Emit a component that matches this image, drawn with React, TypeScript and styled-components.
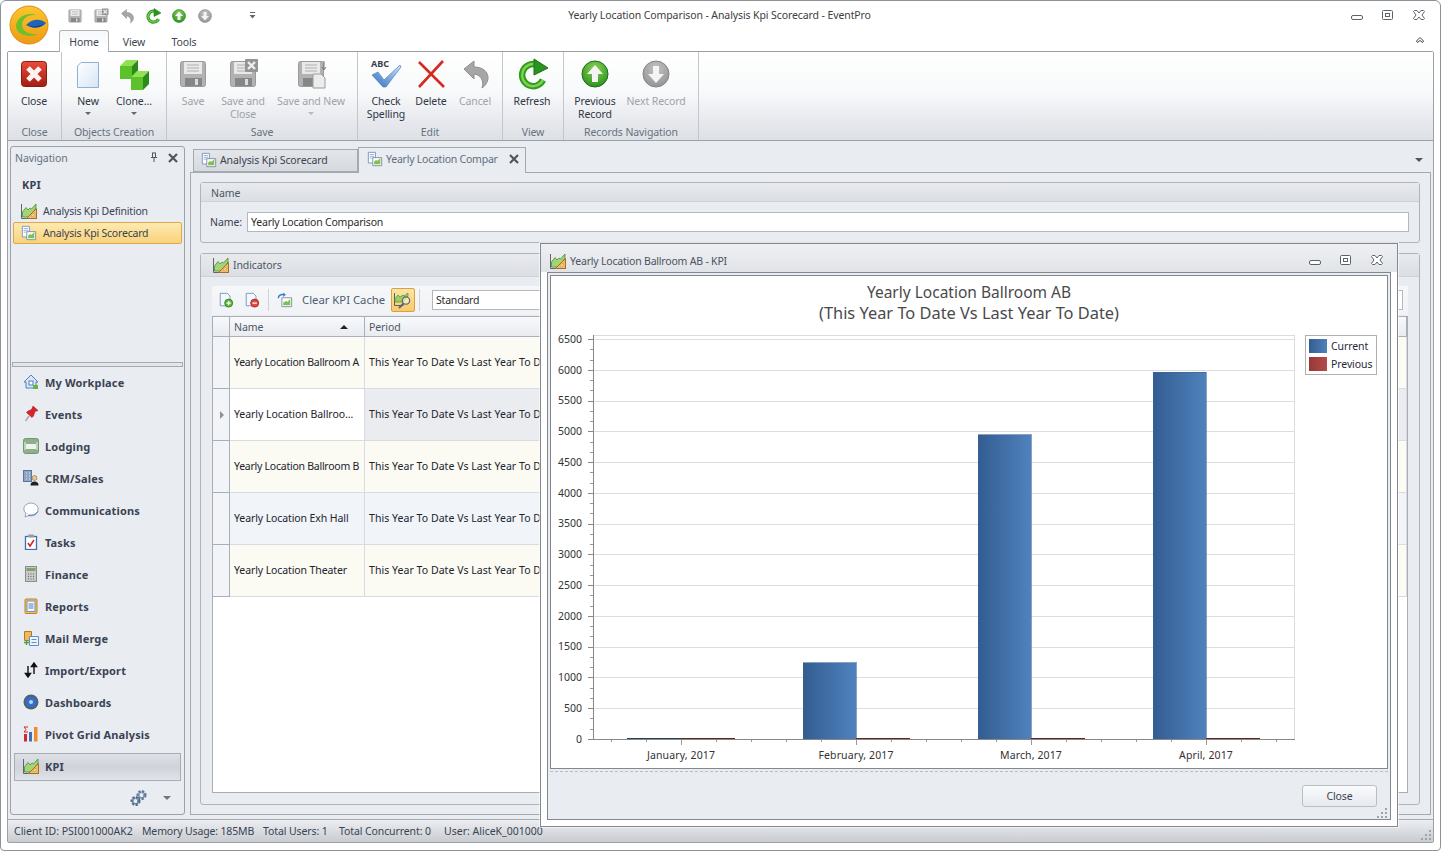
import React from "react";
import styled, { createGlobalStyle } from "styled-components";

const FONT = `"Noto Sans", "DejaVu Sans", sans-serif`;

const Global = createGlobalStyle`
  html, body { margin: 0; padding: 0; background: #fff; overflow: hidden; }
  body { font-family: ${FONT}; font-size: 10.5px; letter-spacing: -0.1px; color: #2f3744; }
  * { box-sizing: border-box; }
`;

const Window = styled.div`
  position: relative; width: 1441px; height: 851px; background: #fff;
  border: 1px solid #8d9299; border-radius: 6px 6px 4px 4px;
  display: flex; flex-direction: column; overflow: hidden;
`;
const LogoSlot = styled.div`position: absolute; left: 8px; top: 4px; width: 40px; height: 40px;`;
const TitleRow = styled.div`
  height: 29px; display: grid; grid-template-columns: 1fr auto 1fr; align-items: center;
`;
const Qat = styled.div`display: flex; align-items: center; gap: 10px; padding-left: 66px;`;
const QatMenu = styled.span`margin-left: 25px; display: flex;`;
const WindowTitle = styled.div`color: #3d3d3d; padding: 0 2px 2px 0;`;
const Controls = styled.div`display: flex; justify-content: flex-end; align-items: center; gap: 17px; padding-right: ${p => p.$pad}px;`;
const TabRow = styled.div`
  height: 21px; display: flex; align-items: stretch; padding-left: 58px; position: relative; z-index: 1;
`;
const TopTab = styled.div`
  width: 50px; height: 22px; display: flex; align-items: center; justify-content: center; color: #3d4654;
  border: 1px solid ${p => (p.$active ? "#aeb3b9" : "transparent")};
  border-bottom: 0; border-radius: 3px 3px 0 0;
  background: ${p => (p.$active ? "linear-gradient(#f7f8fa,#fff)" : "transparent")};
`;
const Collapse = styled.div`margin-left: auto; padding: 5px 15px 0 0;`;
const Frame = styled.div`
  flex: 1; margin: 0 6px 7px 6px; border: 1px solid #9ca1a8; display: flex; flex-direction: column; min-height: 0;
  border-radius: 2px;
`;
const Ribbon = styled.div`
  height: 89px; display: flex; border-bottom: 1px solid #9ca1a8;
  background: linear-gradient(#fff 0%, #f8f9fa 45%, #e6e8ed 80%, #dde0e5 100%);
`;
const RibbonGroup = styled.div`
  width: ${p => p.$w}px; display: flex; flex-direction: column; border-right: 1px solid #c3c7cd;
`;
const GroupButtons = styled.div`height: 73px; display: flex; padding-left: ${p => p.$pad}px;`;
const GroupLabel = styled.div`height: 15px; line-height: 14px; text-align: center; color: #66727f;`;
const RibbonButton = styled.div`
  width: ${p => p.$w}px; display: flex; flex-direction: column; align-items: center; padding-top: 6px;
  color: ${p => (p.$off ? "#9fa3a8" : "#2f3744")}; flex-shrink: 0;
`;
const RibbonLabel = styled.div`margin-top: 5px; line-height: 13px; text-align: center; white-space: pre-line;`;
const Caret = styled.div`
  width: 0; height: 0; margin-top: 4px; border: 3px solid transparent; border-bottom: 0;
  border-top-color: ${p => (p.$off ? "#b5b9be" : "#666")};
`;
const Workspace = styled.div`
  flex: 1; display: flex; gap: 5px; padding: 5px 2px 4px 2px; background: #e9ecf1; min-height: 0;
`;
const NavPanel = styled.div`
  width: 175px; border: 1px solid #9ca1a8; border-radius: 3px; display: flex; flex-direction: column;
`;
const NavTop = styled.div`flex: 1; min-height: 0;`;
const NavHeader = styled.div`
  height: 22px; display: flex; align-items: center; padding: 0 5px 0 4px; color: #66727f;
`;
const NavHeaderText = styled.span`flex: 1;`;
const NavPin = styled.span`display: flex; margin-right: 5px;`;
const NavTitle = styled.div`
  height: 22px; margin: 5px 0 4px; padding-left: 11px; line-height: 22px; font-weight: 700; font-size: 11px; letter-spacing: .15px; color: #3a4352;
`;
const NavLink = styled.div`
  height: 22px; margin: 0 2px; padding: 0 0 1px 7px; display: flex; align-items: center; gap: 6px; color: #3a4352; letter-spacing: -.2px;
  border: 1px solid ${p => (p.$active ? "#dfa64b" : "transparent")}; border-radius: 2px;
  background: ${p => (p.$active ? "linear-gradient(#fdeab0,#f9d27c)" : "transparent")};
`;
const Splitter = styled.div`height: 5px; margin: 0 1px; border: 1px solid #a5aab1; background: #e3e6ea;`;
const ModuleRow = styled.div`
  height: 28px; margin: 2px 3px; padding: 0 0 2px 8px; display: flex; align-items: center; gap: 6px;
  font-weight: 700; font-size: 11px; letter-spacing: .15px; color: #3a4352; border: 1px solid ${p => (p.$active ? "#a8adb4" : "transparent")};
  background: ${p => (p.$active ? "linear-gradient(#dde0e5,#cfd3da 50%,#e0e3e8)" : "transparent")};
`;
const NavFooter = styled.div`height: 31px; display: flex; align-items: center; justify-content: flex-end; gap: 15px; padding: 0 13px 2px 0;`;
const FooterCaret = styled.div`width: 0; height: 0; border: 4px solid transparent; border-bottom: 0; border-top-color: #777;`;
const DocArea = styled.div`flex: 1; display: flex; flex-direction: column; min-width: 0;`;
const DocTabs = styled.div`height: 26px; display: flex; align-items: flex-end; padding-left: 3px; position: relative; z-index: 1;`;
const DocTab = styled.div`
  width: ${p => p.$w}px; height: ${p => (p.$active ? 26 : 23)}px; display: flex; align-items: center; gap: 3px;
  padding: 0 0 ${p => (p.$active ? 4 : 2)}px ${p => (p.$active ? 8 : 7)}px;
  border: 1px solid #a5aab1; border-bottom: ${p => (p.$active ? "0" : "1px solid #a5aab1")};
  color: ${p => (p.$active ? "#5f6f80" : "#3a4352")}; letter-spacing: ${p => (p.$active ? "-.23px" : "-.1px")};
  background: ${p => (p.$active ? "#e9ecf1" : "linear-gradient(#e4e6ea,#d6d9de)")};
  margin-bottom: ${p => (p.$active ? "-1px" : "0")};
`;
const DocTabText = styled.span`flex: 1; white-space: nowrap;`;
const DocTabClose = styled.span`display: flex; padding-right: 5px;`;
const DocMenu = styled.div`margin-left: auto; margin-bottom: 10px; margin-right: 8px; width: 0; height: 0; border: 4px solid transparent; border-bottom: 0; border-top-color: #555;`;
const DocBody = styled.div`
  flex: 1; border: 1px solid #a5aab1; padding: 9px 10px 9px 9px; display: flex; flex-direction: column; gap: 10px; min-height: 0;
`;
const Group = styled.div`border: 1px solid #b0b4ba; border-radius: 3px; display: flex; flex-direction: column;`;
const GroupFill = styled(Group)`flex: 1; min-height: 0;`;
const GroupHeader = styled.div`
  height: ${p => p.$h}px; display: flex; align-items: center; gap: 4px; padding: ${p => p.$top}px 0 0 ${p => p.$pad}px; color: #4c5866;
  background: linear-gradient(#e8eaee,#dbdee3); border-bottom: 1px solid #ced1d6;
`;
const NameRow = styled.div`height: 40px; display: flex; padding: 10px 10px 0 9px; color: #3a4352;`;
const NameLabel = styled.div`width: 37px; line-height: 20px;`;
const TextBox = styled.div`
  flex: 1; height: 20px; line-height: 18px; background: #fff; border: 1px solid #b4b8be; padding-left: 3px; color: #2b2b2b; letter-spacing: -.2px;
  margin-right: ${p => p.$mr || 0}px; margin-left: ${p => p.$ml || 0}px;
`;
const IndicatorsBody = styled.div`flex: 1; padding: 9px 11px 11px; display: flex; flex-direction: column; min-height: 0;`;
const Toolbar = styled.div`
  height: 29px; display: flex; align-items: center; padding: 0 0 1px 6px; background: linear-gradient(#f6f7f9,#f0f2f5);
`;
const ToolSlot = styled.span`display: flex; margin-right: ${p => p.$mr || 0}px;`;
const ToolSep = styled.span`width: 1px; height: 22px; background: #cfd2d7; margin: 0 ${p => p.$mr}px 0 ${p => p.$ml}px;`;
const ToolText = styled.span`width: 89px; margin-left: 9px; padding-bottom: 2px; color: #4c5d70; font-size: 11.3px; letter-spacing: 0; white-space: nowrap;`;
const ToolToggle = styled.span`
  width: 24px; height: 24px; display: flex; align-items: center; justify-content: center;
  border: 1px solid #d9a044; border-radius: 2px; background: linear-gradient(#fde5a6,#f8ca6b);
`;
const Grid = styled.div`
  flex: 1; margin-top: 1px; border: 1px solid #a9aeb6; padding: 0; background: #fff; min-height: 0;
`;
const GridHeader = styled.div`
  height: 20px; display: grid; grid-template-columns: 17px 135px 1fr; background: linear-gradient(#f8f9fb,#e8ebf0); border-bottom: 1px solid #a9b0bc;
  color: #4c5866;
`;
const HeadStub = styled.div`border-right: 1px solid #a9b0bc;`;
const HeadCell = styled.div`
  display: flex; align-items: center; justify-content: space-between; padding: 0 16px 0 4px; border-right: 1px solid #a9b0bc;
`;
const SortUp = styled.span`width: 0; height: 0; border: 4px solid transparent; border-top: 0; border-bottom: 4px solid #222;`;
const GridRow = styled.div`height: 52px; display: grid; grid-template-columns: 17px 135px 1fr;`;
const RowHead = styled.div`
  background: #f2f4f8; border-right: 1px solid #a9b0bc; border-bottom: 1px solid #a9b0bc; display: flex; align-items: center; justify-content: center;
`;
const RowArrow = styled.span`width: 0; height: 0; border: 4px solid transparent; border-right: 0; border-left: 4px solid #8d9299; margin-left: 2px;`;
const Cell = styled.div`
  background: ${p => p.$bg}; border-right: 1px solid #d8dbe1; border-bottom: 1px solid #d8dbe1; letter-spacing: ${p => p.$ls}px;
  display: flex; align-items: center; padding: 0 0 1px 4px; color: #20242c; white-space: nowrap; overflow: hidden;
`;
const StatusBar = styled.div`
  height: 23px; display: flex; align-items: center; padding: 0 0 1px 6px; color: #3a4352; position: relative;
  background: linear-gradient(#eceef2,#c8cbd0); border-top: 1px solid #a5aab1;
`;
const StatusItem = styled.span`width: ${p => p.$w}px; white-space: nowrap; flex-shrink: 0; letter-spacing: ${p => p.$ls ?? -0.1}px;`;
const Grip = styled.span`position: absolute; right: ${p => p.$r}px; bottom: ${p => p.$b}px; display: flex;`;

const Modal = styled.div`
  position: absolute; left: 539px; top: 242px; width: 858px; height: 584px; background: #fff; border: 1px solid #83888f;
  display: flex; flex-direction: column; box-shadow: 0 0 0 1px rgba(255,255,255,.6); z-index: 5;
`;
const ModalTitle = styled.div`
  height: 28px; display: grid; grid-template-columns: 1fr auto; align-items: center; padding: 5px 0 0 9px;
  background: linear-gradient(#eff0f3,#e0e3e7);
`;
const ModalTitleText = styled.div`display: flex; align-items: center; gap: 4px; color: #4a5462; letter-spacing: -.2px;`;
const ModalBody = styled.div`
  flex: 1; margin: 0 6px 6px; border: 1px solid #83888f; padding: 2px 2px 0; background: #e9ecf1; display: flex; flex-direction: column;
`;
const ChartPanel = styled.div`height: 494px; border: 1px solid #83888f; background: #fff; display: flex;`;
const ModalFooter = styled.div`
  flex: 1; position: relative; margin-top: 2px; border-top: 1px dashed #b9bdc4; display: flex; justify-content: flex-end; align-items: flex-start;
  padding: 13px 11px 0 0;
`;
const PushButton = styled.div`
  width: 75px; height: 22px; line-height: 20px; text-align: center; color: #3a4352; border: 1px solid #b9bdc4; border-radius: 3px;
  background: linear-gradient(#fafbfc,#e6e9ee);
`;
const ChartTitle = styled.text`font: ${p => p.$size}px ${FONT}; letter-spacing: 0; fill: #4a4a4a; text-anchor: middle;`;
const AxisText = styled.text`font: 10.5px ${FONT}; letter-spacing: ${p => p.$ls}px; fill: #333; text-anchor: ${p => p.$anchor};`;
const LegendText = styled.text`font: 10.5px ${FONT}; letter-spacing: -0.1px; fill: #2a2a3a;`;

/* ---------- icons ---------- */
const Ico = styled.svg`display: block; flex-shrink: 0;`;
const Logo = () => (
  <Ico width="40" height="40" viewBox="0 0 40 40">
    <defs>
      <linearGradient id="lg" x1="0" y1="0" x2="0" y2="1"><stop offset="0" stopColor="#fbc62e" /><stop offset="1" stopColor="#ee9a14" /></linearGradient>
    </defs>
    <circle cx="20" cy="20" r="19" fill="url(#lg)" stroke="#d98e14" />
    <path d="M7 21C8 11 19 7 29 10 20 9 13 13 13 20c0 6 7 10 16 9-8 4-21 2-22-8z" fill="#6cc02c" />
    <path d="M17 20c6-6 14-7 20-2-3 4-11 7-20 2z" fill="#1f63b8" />
    <path d="M20 21c5 1 10 0 15-2-3 3-9 5-15 2z" fill="#0e3f86" />
  </Ico>
);
const Floppy = ({ size = 32, badge }: { size?: number; badge?: "x" | "new" }) => (
  <Ico width={size} height={size} viewBox="0 0 32 32">
    <rect x="3.5" y="3.5" width="25" height="25" rx="2" fill="#b2b2b2" stroke="#9a9a9a" />
    <rect x="7" y="4" width="18" height="12" fill="#e9e9e9" />
    <path d="M10 7h12M10 10h12M10 13h12" stroke="#b0b0b0" />
    <rect x="8" y="20" width="17" height="8" fill="#868686" />
    <rect x="18" y="21" width="3" height="6" fill="#dcdcdc" />
    {badge === "x" && (<g><rect x="18" y="1" width="13" height="13" rx="1" fill="#949494" /><path d="M21 4l7 7M28 4l-7 7" stroke="#eee" strokeWidth="2.4" /></g>)}
    {badge === "new" && (<g><path d="M18 16h8l4 4v10H18z" fill="#ececec" stroke="#9c9c9c" /><path d="M29 3v8M27 9l2 3 2-3" stroke="#777" fill="none" /></g>)}
  </Ico>
);
const Undo = ({ size = 32 }: { size?: number }) => (
  <Ico width={size} height={size} viewBox="0 0 32 32">
    <path d="M5 11L15 3v6c8 0 14 4 14 11 0 4-3 8-6 10 2-6 0-13-8-14v5z" fill="#a6a6a6" stroke="#8e8e8e" />
  </Ico>
);
const Refresh = ({ size = 32 }: { size?: number }) => (
  <Ico width={size} height={size} viewBox="0 0 32 32">
    <path d="M27 22A11 11 0 1 1 20 6.500" fill="none" stroke="#2d9c22" strokeWidth="6.500" />
    <path d="M27 22A11 11 0 1 1 20 6.500" fill="none" stroke="#7ed348" strokeWidth="2.500" />
    <path d="M18 1L32 10 18 17z" fill="#2a9420" stroke="#17700f" />
  </Ico>
);
const RoundArrow = ({ size = 32, dir }: { size?: number; dir: "up" | "down" }) => {
  const id = `ra${dir}${size}`;
  const [a, b, c] = dir === "up" ? ["#8ad152", "#1f8a1c", "#176d14"] : ["#c2c2c2", "#8e8e8e", "#858585"];
  return (
    <Ico width={size} height={size} viewBox="0 0 32 32">
      <defs><radialGradient id={id} cx=".5" cy=".3" r=".8"><stop offset="0" stopColor={a} /><stop offset="1" stopColor={b} /></radialGradient></defs>
      <circle cx="16" cy="16" r="13" fill={`url(#${id})`} stroke={c} />
      <path d={dir === "up" ? "M16 7l8 9h-5v8h-6v-8H8z" : "M16 25l8-9h-5V8h-6v8H8z"} fill="#f4f4f4" />
    </Ico>
  );
};
const NewDoc = () => (
  <Ico width="32" height="32" viewBox="0 0 32 32">
    <defs><linearGradient id="nd" x1="0" y1="0" x2="1" y2="1"><stop offset="0" stopColor="#fff" /><stop offset="1" stopColor="#d5e4f5" /></linearGradient></defs>
    <path d="M9 4.500L5.500 8v21.500h21v-25z" fill="url(#nd)" stroke="#8db0da" />
  </Ico>
);
const Cube = ({ x, y }: { x: number; y: number }) => (
  <g transform={`translate(${x} ${y})`}>
    <path d="M0 6L6 0h12l-6 6z" fill="#8fe252" />
    <path d="M0 6h12v13H0z" fill="#5cc22c" />
    <path d="M12 6l6-6v13l-6 6z" fill="#2c8a18" />
  </g>
);
const Clone = () => (
  <Ico width="32" height="32" viewBox="0 0 32 32"><Cube x={2} y={2} /><Cube x={13} y={13} /></Ico>
);
const CloseIcon = () => (
  <Ico width="32" height="32" viewBox="0 0 32 32">
    <defs><linearGradient id="cx" x1="0" y1="0" x2="0" y2="1"><stop offset="0" stopColor="#ea4c3c" /><stop offset="1" stopColor="#a21c12" /></linearGradient></defs>
    <rect x="3.5" y="3.5" width="25" height="25" rx="3" fill="url(#cx)" stroke="#8a1d13" />
    <path d="M10 10l12 12M22 10L10 22" stroke="#fdf3f0" strokeWidth="5" />
  </Ico>
);
const SpellText = styled.text`font: 700 9px ${FONT}; letter-spacing: 0; fill: #39424e;`;
const Spell = () => (
  <Ico width="32" height="32" viewBox="0 0 32 32">
    <defs><linearGradient id="sp" x1="0" y1="1" x2="1" y2="0"><stop offset="0" stopColor="#2f6fbe" /><stop offset="1" stopColor="#cfe2f6" /></linearGradient></defs>
    <SpellText x="1" y="9">ABC</SpellText>
    <path d="M2 17l6-3 6 8L30 7l1 2-15 20h-3z" fill="url(#sp)" stroke="#4b82c4" strokeWidth=".7" />
  </Ico>
);
const DeleteIcon = () => (
  <Ico width="32" height="32" viewBox="0 0 32 32">
    <path d="M4 4l25 25M28 3L4 29" stroke="#d52a20" strokeWidth="2.600" />
  </Ico>
);
const KpiIcon = () => (
  <Ico width="16" height="16" viewBox="0 0 16 16">
    <path d="M.5 1v14.500H16" stroke="#5a6570" fill="none" />
    <path d="M1.500 9L5 4.500l2 2.500 2-2 1.500 1L15 1v4l-6 9H1.500z" fill="#a5d377" stroke="#4c8f2b" strokeWidth=".8" />
    <path d="M15.500 5.500v10h-10z" fill="#efbd69" stroke="#a5701f" />
    <path d="M13 10v3H10z" fill="#fff6dd" stroke="#c08a35" strokeWidth=".5" />
  </Ico>
);
const Scorecard = () => (
  <Ico width="16" height="16" viewBox="0 0 18 18">
    <path d="M1.500 1.500h8v12h-8z" fill="#fff" stroke="#6e93c2" />
    <path d="M3 4h5M3 6h5M3 8h3" stroke="#93add0" />
    <path d="M6.500 7.500h10v9h-10z" fill="#fff" stroke="#7b8a99" />
    <path d="M8 15v-3l2-2 2 1 3-3v7z" fill="#7cc152" />
  </Ico>
);
const S16 = ({ children }: { children: React.ReactNode }) => <Ico width="16" height="16" viewBox="0 0 16 16">{children}</Ico>;
const House = () => <S16><path d="M8 1L1 8h2v6h10V8h2z" fill="#dbe7f6" stroke="#4e7fbe" /><rect x="6" y="7" width="4" height="4" fill="#fff" stroke="#4e7fbe" /><rect x="10" y="11" width="5" height="4" fill="#67b43f" /></S16>;
const Pin = () => <S16><path d="M10 0l5 4.500-3 1-1.500 4.500-1.500 1.500-5.500-5 1.500-1.500 3.500-1.500z" fill="#d8232a" stroke="#a51419" strokeWidth=".5" /><path d="M6 10L2.500 15" stroke="#a8a8a8" strokeWidth="1.500" /></S16>;
const Lodging = () => <S16><rect x=".5" y=".5" width="15" height="15" rx="2" fill="#8fae8c" stroke="#6f9a6c" /><path d="M3 6h10v5H3z" fill="#eef4ec" /><path d="M2 4v8M14 4v8" stroke="#eef4ec" /></S16>;
const Crm = () => <S16><rect x=".5" y=".5" width="8" height="11" fill="#8ea4c6" stroke="#5f7598" /><path d="M3 3h1M6 3h1M3 6h1M6 6h1M3 9h1M6 9h1" stroke="#e2e9f2" /><circle cx="11.500" cy="8" r="2.500" fill="#e9c48e" stroke="#7a5c2e" strokeWidth=".5" /><path d="M7.500 15.500c0-3 1.500-4 4-4s4 1 4 4z" fill="#222" /></S16>;
const Bubble = () => <S16><ellipse cx="8" cy="7" rx="7.200" ry="6" fill="#fff" stroke="#9aa3ad" /><path d="M3 11l-1 4 5-2" fill="#fff" stroke="#9aa3ad" /><path d="M5 13.400c4 1 8 0 10-4" stroke="#4e88c8" fill="none" /></S16>;
const Clip = () => <S16><rect x="2.500" y="2.500" width="11" height="13" fill="#fff" stroke="#3f70ad" strokeWidth="1.300" /><rect x="5" y="0.500" width="6" height="3" rx="1" fill="#9a9a9a" /><path d="M5 9l2 3 4-6" stroke="#d0282e" strokeWidth="1.600" fill="none" /></S16>;
const Calc = () => <S16><rect x="2.500" y=".5" width="11" height="15" fill="#c9c9c9" stroke="#8b8b8b" /><rect x="3.500" y="2" width="9" height="3" fill="#7fa36b" /><path d="M5 8h1M7.500 8h1M10 8h1M5 10.500h1M7.500 10.500h1M10 10.500h1M5 13h1M7.500 13h1M10 13h1" stroke="#666" /></S16>;
const Report = () => <S16><rect x="2" y="1" width="12" height="14.500" rx="1" fill="#f3c166" stroke="#bd8526" /><rect x="4" y="3" width="8" height="10.500" fill="#f5f8fc" stroke="#6d93c2" /><path d="M5.500 6h5M5.500 8h5M5.500 10h5" stroke="#4e7fbe" /></S16>;
const Merge = () => <S16><path d="M1.500 1.500h7v9h-7z" fill="#f0b95f" stroke="#b27b20" /><path d="M6.500 6.500h9v9h-9z" fill="#eef4fb" stroke="#5f8fca" /><path d="M8.500 9.500h5M8.500 12.500h5" stroke="#5f8fca" /><path d="M3.500 10v5M1 12.500h5" stroke="#4da636" strokeWidth="1.500" /></S16>;
const ImpExp = () => <S16><path d="M5 4v10M2.500 11.500L5 15l2.500-3.500z" stroke="#111" strokeWidth="1.400" fill="#111" /><path d="M11 12V2M8.500 4.500L11 1l2.500 3.500z" stroke="#111" strokeWidth="1.400" fill="#111" /></S16>;
const Dash = () => <S16><circle cx="8" cy="8" r="7.500" fill="#55606d" /><circle cx="8" cy="8" r="5.300" fill="#2f6fd0" /><circle cx="8" cy="8" r="2" fill="#b8d3f5" /></S16>;
const Pivot = () => <S16><path d="M5 1H1l2 2.500L1 6h4" stroke="#d8232a" fill="none" /><rect x="1" y="8" width="3" height="7.500" fill="#d8232a" /><rect x="6" y="6" width="3" height="9.500" fill="#3f70b5" /><rect x="11" y="1" width="3.500" height="14.500" fill="#ee8b2d" /></S16>;
const Gear = () => (
  <Ico width="18" height="18" viewBox="0 0 18 18">
    <circle cx="11.500" cy="6" r="3.500" fill="none" stroke="#5d7896" strokeWidth="3" strokeDasharray="2 1.300" />
    <circle cx="11.500" cy="6" r="3" fill="none" stroke="#6f88a5" strokeWidth="1.200" />
    <circle cx="5.500" cy="12" r="3.500" fill="none" stroke="#4f6a88" strokeWidth="3" strokeDasharray="2 1.300" />
    <circle cx="5.500" cy="12" r="3" fill="none" stroke="#5f7a98" strokeWidth="1.200" />
  </Ico>
);
const Pushpin = () => <S16><path d="M6 3h4M6.500 3v4M9.500 3v4M5 7.500h6M8 8v4" stroke="#555" fill="none" /></S16>;
const XMark = ({ c = "#555" }: { c?: string }) => <Ico width="12" height="12" viewBox="0 0 12 12"><path d="M2 2l8 8M10 2l-8 8" stroke={c} strokeWidth="2.200" /></Ico>;
const DocBadge = ({ kind }: { kind: "add" | "del" }) => (
  <Ico width="16" height="16" viewBox="0 0 18 18">
    <path d="M2.500 1.500h8l3 3v11h-11z" fill="#f4f8fd" stroke="#6e93c2" />
    <circle cx="12" cy="12.500" r="4.500" fill={kind === "add" ? "#5cb83a" : "#e0493f"} stroke={kind === "add" ? "#357f1d" : "#a8231b"} />
    <path d={kind === "add" ? "M9.500 12.500h5M12 10v5" : "M9.500 12.500h5"} stroke="#fff" strokeWidth="1.400" />
  </Ico>
);
const RefreshCard = () => (
  <Ico width="16" height="16" viewBox="0 0 18 18">
    <path d="M5.500 6.500h11v10h-11z" fill="#fff" stroke="#7b8a99" />
    <path d="M7 15v-3l3-2 2 1 3-3v7z" fill="#7cc152" />
    <path d="M1.500 7c0-3 3-5 6-4" stroke="#3a78c6" strokeWidth="1.600" fill="none" />
    <path d="M7 0.500l3 2.500-3 2.500z" fill="#3a78c6" />
  </Ico>
);
const KpiLens = () => (
  <Ico width="20" height="20" viewBox="0 0 20 20">
    <path d="M1.500 3v12.500h9" stroke="#55606b" fill="none" />
    <path d="M2 12V8.500L5 5l2 2 3-2 1 1 4-3v3l-5 6z" fill="#9ccf6a" stroke="#4d8f2c" strokeWidth=".7" />
    <circle cx="13" cy="10.500" r="3.700" fill="#fdf3d3" fillOpacity=".6" stroke="#5c6670" strokeWidth="1.200" />
    <path d="M10.500 13.500L6 18" stroke="#5c6670" strokeWidth="2" />
  </Ico>
);
const WinMin = () => <Ico width="14" height="14" viewBox="0 0 14 14"><rect x="1.500" y="6.500" width="11" height="4" rx="1.500" fill="#fff" stroke="#5c6269" /></Ico>;
const WinMax = () => <Ico width="14" height="14" viewBox="0 0 14 14"><rect x="1.500" y="1.500" width="10" height="9" rx="1" fill="#fff" stroke="#5c6269" /><rect x="4.500" y="4.500" width="4" height="3" fill="none" stroke="#5c6269" /></Ico>;
const WinClose = () => <Ico width="14" height="14" viewBox="0 0 14 14"><path d="M2.500 1.500h2.500L7 4l2-2.500h2.500l1 1L10 6l2.500 3.500-1 1H9L7 8l-2 2.500H2.500l-1-1L4 6 1.500 2.500z" fill="#fff" stroke="#5c6269" /></Ico>;
const ChevUp = () => <Ico width="10" height="10" viewBox="0 0 10 10"><path d="M1.500 6L5 2.500 8.500 6 7.500 7.500 5 5.500 2.500 7.500z" fill="#fff" stroke="#444" /></Ico>;
const QatCaret = () => <Ico width="9" height="9" viewBox="0 0 9 9"><path d="M2 1.500h5" stroke="#666" /><path d="M1.500 4h6L4.500 7.500z" fill="#666" /></Ico>;
const GripDots = () => <Ico width="11" height="11" viewBox="0 0 11 11"><path d="M8 0h2v2H8zM4 4h2v2H4zM8 4h2v2H8zM0 8h2v2H0zM4 8h2v2H4zM8 8h2v2H8z" fill="#9ea3aa" /></Ico>;

/* ---------- data ---------- */
const modules: [string, React.ReactNode][] = [
  ["My Workplace", <House />], ["Events", <Pin />], ["Lodging", <Lodging />], ["CRM/Sales", <Crm />],
  ["Communications", <Bubble />], ["Tasks", <Clip />], ["Finance", <Calc />], ["Reports", <Report />],
  ["Mail Merge", <Merge />], ["Import/Export", <ImpExp />], ["Dashboards", <Dash />], ["Pivot Grid Analysis", <Pivot />], ["KPI", <KpiIcon />],
];
const PERIOD = "This Year To Date Vs Last Year To Date";
const rows = [
  { name: "Yearly Location Ballroom A", a: "#fbfaf3", b: "#fbfaf3", ls: -0.25 },
  { name: "Yearly Location Ballroo\u2026", a: "#ffffff", b: "#ebecef", cur: true, ls: -0.05 },
  { name: "Yearly Location Ballroom B", a: "#fbfaf3", b: "#fbfaf3", ls: -0.25 },
  { name: "Yearly Location Exh Hall", a: "#f1f4f9", b: "#f1f4f9", ls: -0.1 },
  { name: "Yearly Location Theater", a: "#fbfaf3", b: "#fbfaf3", ls: -0.1 },
];

const Y0 = 739;
const yFor = (v: number) => Y0 - (v / 500) * 30.77;
const bars = [
  { label: "January, 2017", x: 681, v: 0 },
  { label: "February, 2017", x: 856, v: 1240 },
  { label: "March, 2017", x: 1031, v: 4945 },
  { label: "April, 2017", x: 1206, v: 5960 },
];
const ticks = Array.from({ length: 14 }, (_, i) => i * 500);

const Chart = () => (
  <svg width="836" height="492" viewBox="551 276 836 492">
    <defs>
      <linearGradient id="bb"><stop offset="0" stopColor="#335d91" /><stop offset="1" stopColor="#4f82bd" /></linearGradient>
      <linearGradient id="br"><stop offset="0" stopColor="#973836" /><stop offset="1" stopColor="#b34c4a" /></linearGradient>
    </defs>
    <ChartTitle $size={15.5} x="969" y="298">Yearly Location Ballroom AB</ChartTitle>
    <ChartTitle $size={16.4} x="969" y="319">(This Year To Date Vs Last Year To Date)</ChartTitle>
    <g shapeRendering="crispEdges">
      <rect x="593.5" y="335.500" width="701" height="404" fill="#fff" stroke="#dcdcdc" />
      {ticks.map(t => (
        <g key={t}>
          <line x1="593" x2="1295" y1={Math.round(yFor(t)) + .5} y2={Math.round(yFor(t)) + .5} stroke="#dedede" />
          <line x1="588" x2="593" y1={Math.round(yFor(t)) + .5} y2={Math.round(yFor(t)) + .5} stroke="#888" />
          {t < 6500 && [1, 2].map(k => (
            <line key={k} x1="590" x2="593" y1={Math.round(yFor(t + (k * 500) / 3)) + .5} y2={Math.round(yFor(t + (k * 500) / 3)) + .5} stroke="#999" />
          ))}
        </g>
      ))}
      {Array.from({ length: 20 }, (_, i) => 611 + i * 35).map(x => (
        <line key={x} x1={x + .5} x2={x + .5} y1="739" y2={(x - 681) % 175 === 0 ? 745 : 742} stroke="#999" />
      ))}
      {bars.map(b => (
        <g key={b.label}>
          {b.v > 0 && <rect x={b.x - 53} y={yFor(b.v)} width="53" height={Y0 - yFor(b.v)} fill="url(#bb)" stroke="#3a6496" strokeWidth=".6" />}
          {b.v === 0 && <rect x={b.x - 54} y={Y0 - 1} width="54" height="1" fill="#24405f" />}
          <rect x={b.x} y={Y0 - 1} width="54" height="1" fill="#642624" />
        </g>
      ))}
      <line x1="593.500" x2="593.500" y1="335" y2="740" stroke="#888" />
      <line x1="588" x2="1295" y1="739.500" y2="739.500" stroke="#888" />
    </g>
    {ticks.map(t => <AxisText key={t} $ls={0} $anchor="end" x="582" y={yFor(t) + 3.8}>{t}</AxisText>)}
    {bars.map(b => <AxisText key={b.label} $ls={0.12} $anchor="middle" x={b.x} y="759">{b.label}</AxisText>)}
    <rect x="1305.500" y="335.500" width="71" height="39" fill="#fff" stroke="#b0b0b0" />
    <rect x="1309" y="339" width="18" height="14" fill="url(#bb)" />
    <rect x="1309" y="357" width="18" height="14" fill="url(#br)" />
    <LegendText x="1331" y="350">Current</LegendText>
    <LegendText x="1331" y="368">Previous</LegendText>
  </svg>
);

type Btn = { w: number; label: string; icon: React.ReactNode; off?: boolean; caret?: boolean };
const groups: { w: number; pad: number; label: string; btns: Btn[] }[] = [
  { w: 54, pad: 1, label: "Close", btns: [{ w: 50, label: "Close", icon: <CloseIcon /> }] },
  { w: 105, pad: 8, label: "Objects Creation", btns: [
    { w: 36, label: "New", icon: <NewDoc />, caret: true },
    { w: 56, label: "Clone\u2026", icon: <Clone />, caret: true } ] },
  { w: 191, pad: 6, label: "Save", btns: [
    { w: 40, label: "Save", icon: <Floppy />, off: true },
    { w: 60, label: "Save and\nClose", icon: <Floppy badge="x" />, off: true },
    { w: 76, label: "Save and New", icon: <Floppy badge="new" />, off: true, caret: true } ] },
  { w: 145, pad: 6, label: "Edit", btns: [
    { w: 44, label: "Check\nSpelling", icon: <Spell /> },
    { w: 46, label: "Delete", icon: <DeleteIcon /> },
    { w: 42, label: "Cancel", icon: <Undo />, off: true } ] },
  { w: 61, pad: 7, label: "View", btns: [{ w: 44, label: "Refresh", icon: <Refresh /> }] },
  { w: 135, pad: 6, label: "Records Navigation", btns: [
    { w: 50, label: "Previous\nRecord", icon: <RoundArrow dir="up" /> },
    { w: 72, label: "Next Record", icon: <RoundArrow dir="down" />, off: true } ] },
];

export default function App() {
  return (
    <Window>
      <Global />
      <LogoSlot><Logo /></LogoSlot>
      <TitleRow>
        <Qat>
          <Floppy size={16} />
          <Floppy size={16} badge="x" />
          <Undo size={16} />
          <Refresh size={16} />
          <RoundArrow size={16} dir="up" />
          <RoundArrow size={16} dir="down" />
          <QatMenu><QatCaret /></QatMenu>
        </Qat>
        <WindowTitle>Yearly Location Comparison - Analysis Kpi Scorecard - EventPro</WindowTitle>
        <Controls $pad={14}><WinMin /><WinMax /><WinClose /></Controls>
      </TitleRow>
      <TabRow>
        <TopTab $active>Home</TopTab>
        <TopTab>View</TopTab>
        <TopTab>Tools</TopTab>
        <Collapse><ChevUp /></Collapse>
      </TabRow>
      <Frame>
        <Ribbon>
          {groups.map(g => (
            <RibbonGroup key={g.label + g.w} $w={g.w}>
              <GroupButtons $pad={g.pad}>
                {g.btns.map(b => (
                  <RibbonButton key={b.label} $w={b.w} $off={b.off}>
                    {b.icon}
                    <RibbonLabel>{b.label}</RibbonLabel>
                    {b.caret && <Caret $off={b.off} />}
                  </RibbonButton>
                ))}
              </GroupButtons>
              <GroupLabel>{g.label}</GroupLabel>
            </RibbonGroup>
          ))}
        </Ribbon>
        <Workspace>
          <NavPanel>
            <NavTop>
              <NavHeader>
                <NavHeaderText>Navigation</NavHeaderText>
                <NavPin><Pushpin /></NavPin>
                <XMark />
              </NavHeader>
              <NavTitle>KPI</NavTitle>
              <NavLink><KpiIcon />Analysis Kpi Definition</NavLink>
              <NavLink $active><Scorecard />Analysis Kpi Scorecard</NavLink>
            </NavTop>
            <Splitter />
            {modules.map(([label, icon]) => (
              <ModuleRow key={label} $active={label === "KPI"}>{icon}{label}</ModuleRow>
            ))}
            <NavFooter><Gear /><FooterCaret /></NavFooter>
          </NavPanel>
          <DocArea>
            <DocTabs>
              <DocTab $w={165}><Scorecard /><DocTabText>Analysis Kpi Scorecard</DocTabText></DocTab>
              <DocTab $w={168} $active><Scorecard /><DocTabText>Yearly Location Compar</DocTabText><DocTabClose><XMark /></DocTabClose></DocTab>
              <DocMenu />
            </DocTabs>
            <DocBody>
              <Group>
                <GroupHeader $h={19} $pad={10} $top={1}>Name</GroupHeader>
                <NameRow>
                  <NameLabel>Name:</NameLabel>
                  <TextBox>Yearly Location Comparison</TextBox>
                </NameRow>
              </Group>
              <GroupFill>
                <GroupHeader $h={23} $pad={12} $top={0}><KpiIcon />Indicators</GroupHeader>
                <IndicatorsBody>
                  <Toolbar>
                    <ToolSlot $mr={10}><DocBadge kind="add" /></ToolSlot>
                    <ToolSlot><DocBadge kind="del" /></ToolSlot>
                    <ToolSep $ml={8} $mr={8} />
                    <ToolSlot><RefreshCard /></ToolSlot>
                    <ToolText>Clear KPI Cache</ToolText>
                    <ToolToggle><KpiLens /></ToolToggle>
                    <ToolSep $ml={4} $mr={0} />
                    <TextBox $ml={12} $mr={5}>Standard</TextBox>
                  </Toolbar>
                  <Grid>
                    <GridHeader>
                      <HeadStub />
                      <HeadCell>Name<SortUp /></HeadCell>
                      <HeadCell>Period</HeadCell>
                    </GridHeader>
                    {rows.map(r => (
                      <GridRow key={r.name}>
                        <RowHead>{r.cur && <RowArrow />}</RowHead>
                        <Cell $bg={r.a} $ls={r.ls}>{r.name}</Cell>
                        <Cell $bg={r.b} $ls={0.05}>{PERIOD}</Cell>
                      </GridRow>
                    ))}
                  </Grid>
                </IndicatorsBody>
              </GroupFill>
            </DocBody>
          </DocArea>
        </Workspace>
        <StatusBar>
          <StatusItem $w={128} $ls={0}>Client ID: PSI001000AK2</StatusItem>
          <StatusItem $w={121} $ls={-0.15}>Memory Usage: 185MB</StatusItem>
          <StatusItem $w={76}>Total Users: 1</StatusItem>
          <StatusItem $w={105}>Total Concurrent: 0</StatusItem>
          <StatusItem $w={100} $ls={0}>User: AliceK_001000</StatusItem>
          <Grip $r={1} $b={1}><GripDots /></Grip>
        </StatusBar>
      </Frame>
      <Modal>
        <ModalTitle>
          <ModalTitleText><KpiIcon />Yearly Location Ballroom AB - KPI</ModalTitleText>
          <Controls $pad={13}><WinMin /><WinMax /><WinClose /></Controls>
        </ModalTitle>
        <ModalBody>
          <ChartPanel><Chart /></ChartPanel>
          <ModalFooter>
            <PushButton>Close</PushButton>
            <Grip $r={0} $b={0}><GripDots /></Grip>
          </ModalFooter>
        </ModalBody>
      </Modal>
    </Window>
  );
}
